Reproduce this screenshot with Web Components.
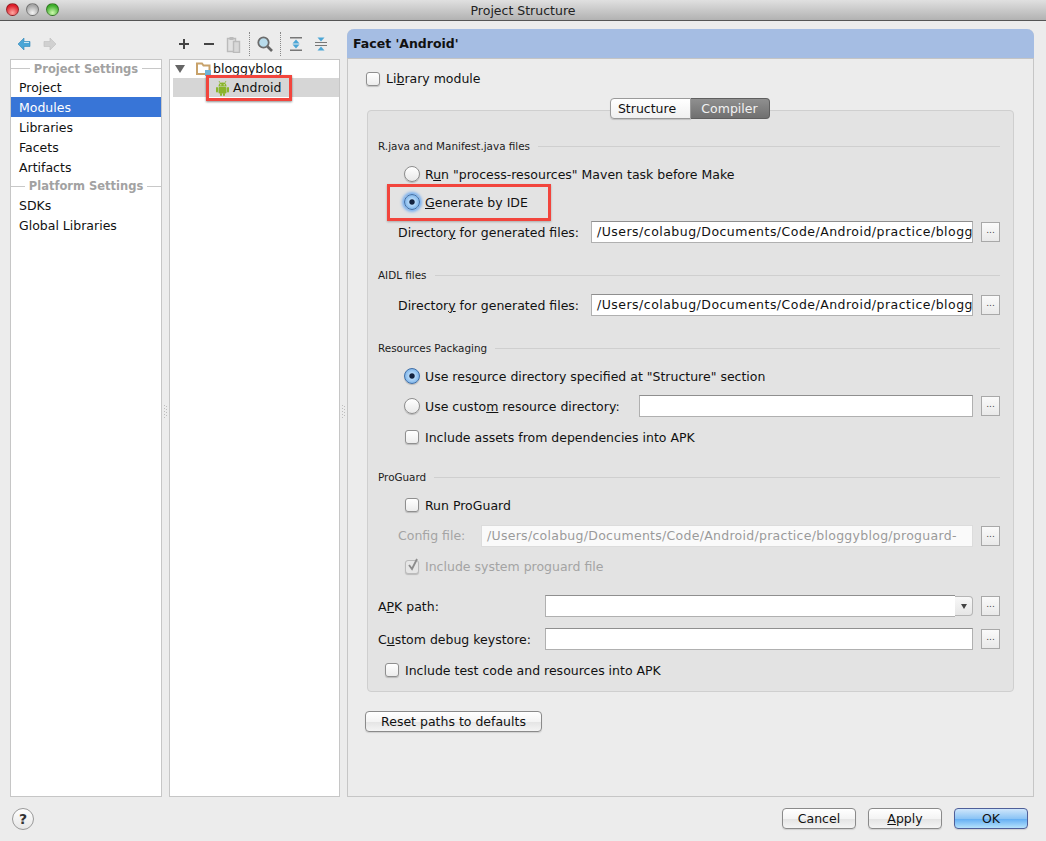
<!DOCTYPE html>
<html>
<head>
<meta charset="utf-8">
<title>Project Structure</title>
<style>
html, body { margin: 0; padding: 0; }
body { width: 1046px; height: 841px; overflow: hidden; background: #ececec; font: 12.5px "DejaVu Sans", sans-serif; color: #111; }
</style>
</head>
<body>
<project-structure></project-structure>

<script>
class TitleBar extends HTMLElement {
  constructor() {
    super();
    this.attachShadow({mode: "open"}).innerHTML = `
    <style>
      :host { display: flex; align-items: center; justify-content: center; position: relative; height: 20px;
        background: linear-gradient(#e0e0e0, #b2b2b2); border-bottom: 1px solid #555; font-size: 12.5px; color: #222; }
      .lights { position: absolute; left: 6px; top: 3px; display: flex; gap: 7px; }
      .lights i { width: 11px; height: 11px; border-radius: 50%; border: 1px solid rgba(0,0,0,.35); }
      .r { background: radial-gradient(circle at 50% 80%, #ffa9a3, #dd1f2b 70%); }
      .g { background: radial-gradient(circle at 50% 80%, #f4f4f4, #a6a6a6 70%); }
      .v { background: radial-gradient(circle at 50% 80%, #cffab0, #3fae2c 70%); }
    </style>
    <div class="lights"><i class="r"></i><i class="g"></i><i class="v"></i></div>
    <slot></slot>`;
  }
}
customElements.define("title-bar", TitleBar);

class TbIcon extends HTMLElement {
  static icons = {
    back: `<path d="M1 7 7 1v3.5h6v5H7V13z" fill="#4ba6d6" stroke="#2f86b8" stroke-width=".6"/><path d="M7 5.5h5" stroke="#c8e6f5"/>`,
    fwd: `<path d="M13 7 7 1v3.5H1v5h6V13z" fill="#d0d0d0" stroke="#bdbdbd" stroke-width=".6"/>`,
    plus: `<path d="M2 7h10M7 2v10" stroke="#444" stroke-width="2"/>`,
    minus: `<path d="M2 7h10" stroke="#444" stroke-width="2"/>`,
    copy: `<path d="M1.5 2.5h8v13h-8z" fill="#e2e2e2" stroke="#bbb" stroke-width="1.4"/><path d="M7.5 5.5h6v11h-6z" fill="#d8d8d8" stroke="#bbb" stroke-width="1.4"/><path d="M3.5 1h4v3h-4z" fill="#bbb"/>`,
    find: `<circle cx="6.5" cy="6.5" r="5.2" fill="#b9dcec" stroke="#6c6c6c" stroke-width="1.8"/><path d="M10.5 10.5 15 15" stroke="#666" stroke-width="2.6"/>`,
    expand: `<path d="M1 .8h12M1 13.2h12" stroke="#777" stroke-width="1.6"/><path d="M7 2.5 10.5 6.500h-7zM7 11.5 10.5 7.500h-7z" fill="#4ba6d6"/>`,
    collapse: `<path d="M1 5.500h12M1 8.500h12" stroke="#777" stroke-width="1.2"/><path d="M7 4.500 10.5 .5h-7zM7 9.500 10.5 13.500h-7z" fill="#4ba6d6"/>`
  };
  constructor() {
    super();
    const n = this.getAttribute("name");
    const big = n == "copy" || n == "find";
    const w = big ? 16 : 14, h = big ? 17 : 14;
    this.attachShadow({mode: "open"}).innerHTML = `
    <style>:host { display: flex; width: 17px; height: 18px; align-items: center; justify-content: center; }</style>
    <svg width="${w}" height="${h}" viewBox="0 0 ${w} ${h}">${TbIcon.icons[n]}</svg>`;
  }
}
customElements.define("tb-icon", TbIcon);

class PanelList extends HTMLElement {
  constructor() {
    super();
    this.attachShadow({mode: "open"}).innerHTML = `
    <style>
      :host { display: block; background: #fff; border: 1px solid #c6c6c6; box-sizing: border-box; height: 738px; }
    </style>
    <slot></slot>`;
  }
}
customElements.define("panel-list", PanelList);

class ListHead extends HTMLElement {
  constructor() {
    super();
    this.attachShadow({mode: "open"}).innerHTML = `
    <style>
      :host { display: flex; align-items: center; height: 17px; gap: 4px; color: #a2a2a2; font-weight: bold; font-size: 11.5px; white-space: nowrap; }
      :host::before, :host::after { content: ""; flex: 1; height: 1px; background: #c8c8c8; }
    </style>
    <slot></slot>`;
  }
}
customElements.define("list-head", ListHead);

class ListItem extends HTMLElement {
  constructor() {
    super();
    this.attachShadow({mode: "open"}).innerHTML = `
    <style>
      :host { display: flex; align-items: center; height: 20px; padding-left: 8px; white-space: nowrap; }
      :host([selected]) { background: #3875d7; color: #fff; }
    </style>
    <slot></slot>`;
  }
}
customElements.define("list-item", ListItem);

class TreePanel extends HTMLElement {
  constructor() {
    super();
    this.attachShadow({mode: "open"}).innerHTML = `
    <style>
      :host { display: block; position: relative; background: #fff; border: 1px solid #c6c6c6; box-sizing: border-box; height: 738px; }
      .row { display: flex; align-items: center; white-space: nowrap; }
      .root { height: 17px; padding-left: 5px; }
      .tw { width: 0; height: 0; border: 5px solid transparent; border-top: 8px solid #666; border-bottom: 0; margin-right: 11px; }
      .root svg { margin-right: 2px; }
      .child { height: 19px; margin: 1px 0 0 3px; padding-left: 42px; background: #d6d6d6; }
      .child svg { margin-right: 3px; }
      .mark { position: absolute; left: 36px; top: 15px; width: 86px; height: 26px; box-sizing: border-box; border: 3px solid #f2453d; box-shadow: 0 1px 2px rgba(0,0,0,.45); }
    </style>
    <div class="row root"><i class="tw"></i>
      <svg width="15" height="14" viewBox="0 0 15 14"><path d="M1 1.500h5l1.500 2H13.500V12H1z" fill="#fff" stroke="#c8a26a" stroke-width="2"/><rect x="9" y="8" width="6" height="6" fill="#6eb4d8"/></svg>
      <span>bloggyblog</span></div>
    <div class="row child">
      <svg width="15" height="16" viewBox="0 0 15 16" fill="#8ab52c"><path d="M3.500 6.500a4 4 0 0 1 8 0z"/><path d="M5.200 3 4 1M9.800 3 11 1" stroke="#8ab52c" stroke-width=".8"/><rect x="3.500" y="7" width="8" height="6.500" rx="1"/><rect x="1" y="7" width="2" height="5.500" rx="1"/><rect x="12" y="7" width="2" height="5.500" rx="1"/><rect x="5" y="13" width="2" height="3" rx="1"/><rect x="8" y="13" width="2" height="3" rx="1"/><circle cx="5.800" cy="4.800" r=".6" fill="#fff"/><circle cx="9.200" cy="4.800" r=".6" fill="#fff"/></svg>
      <span>Android</span></div>
    <div class="mark"></div>`;
  }
}
customElements.define("tree-panel", TreePanel);

// one line of the form; h/top/left place it in the flow of the group
class FormRow extends HTMLElement {
  constructor() {
    super();
    const h = this.getAttribute("h") || 28, top = this.getAttribute("top") || 0, left = this.getAttribute("left") || 0;
    this.attachShadow({mode: "open"}).innerHTML = `
    <style>
      :host { display: flex; align-items: center; box-sizing: border-box; height: ${h}px; margin-top: ${top}px; padding-left: ${left}px; padding-right: 13px; white-space: nowrap; }
    </style>
    <slot></slot>`;
  }
}
customElements.define("form-row", FormRow);

class GroupHead extends HTMLElement {
  constructor() {
    super();
    this.attachShadow({mode: "open"}).innerHTML = `
    <style>
      :host { display: flex; align-items: center; gap: 8px; box-sizing: border-box; height: 18px; margin-top: var(--top, 18px); margin-bottom: 5px; padding: 0 13px 0 10px; font-size: 10.4px; white-space: nowrap; color: #1c1c1c; }
      :host::after { content: ""; flex: 1; height: 1px; background: #cfcfcf; }
    </style>
    <slot></slot>`;
  }
}
customElements.define("group-head", GroupHead);

class MacRadio extends HTMLElement {
  constructor() {
    super();
    this.attachShadow({mode: "open"}).innerHTML = `
    <style>
      :host { display: inline-flex; align-items: center; gap: 5px; position: relative; }
      .o { width: 16px; height: 16px; border-radius: 50%; box-sizing: border-box; border: 1px solid #8d8d8d; background: linear-gradient(#fff, #e8e8e8); box-shadow: 0 1px 1px rgba(0,0,0,.2); }
      :host([checked]) .o { border-color: #3f6fa8; background: radial-gradient(circle at 50% 50%, #14233f 0, #14233f 2.2px, #b4d8f8 3.2px, #5f9fe0 100%); }
      :host([focus]) .o { box-shadow: 0 0 3px 2px #74aef0; }
    </style>
    <span class="o"></span><span><slot></slot></span>`;
  }
}
customElements.define("mac-radio", MacRadio);

class MacCheck extends HTMLElement {
  constructor() {
    super();
    this.attachShadow({mode: "open"}).innerHTML = `
    <style>
      :host { display: inline-flex; align-items: center; gap: 6px; position: relative; }
      :host([disabled]) { color: #a4a4a4; }
      .b { width: 14px; height: 14px; border-radius: 3px; box-sizing: border-box; border: 1px solid #8f8f8f; background: linear-gradient(#fff, #ececec); box-shadow: 0 1px 1px rgba(0,0,0,.18); display: block; }
      :host([disabled]) .b { border-color: #bbb; background: #e6e6e6; }
      svg { position: absolute; left: 2px; top: -1px; display: none; }
      :host([checked]) svg { display: block; }
    </style>
    <span class="b"></span>
    <svg width="12" height="13" viewBox="0 0 12 13"><path d="M2 7l3 4 5-10" fill="none" stroke="#8c8c8c" stroke-width="1.800"/></svg>
    <span><slot></slot></span>`;
  }
}
customElements.define("mac-check", MacCheck);

class TextField extends HTMLElement {
  constructor() {
    super();
    const w = this.getAttribute("w") || 382;
    this.attachShadow({mode: "open"}).innerHTML = `
    <style>
      :host { display: block; box-sizing: border-box; width: ${w}px; height: 22px; margin-left: auto; line-height: 20px; padding-left: 5px; letter-spacing: .48px; background: #fff; border: 1px solid #b0b0b0; border-top-color: #8f8f8f; overflow: hidden; white-space: nowrap; }
      :host([disabled]) { color: #9a9a9a; border-color: #dcdcdc; background: #fafafa; letter-spacing: .28px; }
    </style>
    <slot></slot>`;
  }
}
customElements.define("text-field", TextField);

class DotsButton extends HTMLElement {
  constructor() {
    super();
    this.attachShadow({mode: "open"}).innerHTML = `
    <style>
      :host { display: flex; justify-content: center; box-sizing: border-box; width: 19px; height: 20px; margin-left: 8px; line-height: 14px; font-size: 9px; color: #444; border: 1px solid #a8a8a8; background: linear-gradient(#fafafa, #e9e9e9); }
    </style>
    ...`;
  }
}
customElements.define("dots-button", DotsButton);

class ComboField extends HTMLElement {
  constructor() {
    super();
    this.attachShadow({mode: "open"}).innerHTML = `
    <style>
      :host { display: flex; box-sizing: border-box; width: 428px; height: 22px; margin-left: auto; }
      .t { flex: 1; background: #fff; border: 1px solid #b0b0b0; border-top-color: #8f8f8f; border-right: 0; }
      .a { width: 17px; display: flex; align-items: center; justify-content: center; margin: 1px 0; border: 1px solid #b5b5b5; border-left: 0; border-radius: 0 4px 4px 0; background: linear-gradient(#f8f8f8, #e6e6e6); }
      .a i { width: 0; height: 0; border: 3px solid transparent; border-top: 5px solid #444; border-bottom: 0; }
    </style>
    <div class="t"></div><div class="a"><i></i></div>`;
  }
}
customElements.define("combo-field", ComboField);

class MacButton extends HTMLElement {
  constructor() {
    super();
    const w = this.getAttribute("w") || 74;
    this.attachShadow({mode: "open"}).innerHTML = `
    <style>
      :host { display: flex; align-items: center; justify-content: center; box-sizing: border-box; width: ${w}px; height: 21px; border: 1px solid #8a8a8a; border-radius: 4px; background: linear-gradient(#fff 0, #f4f4f4 50%, #e4e4e4 52%, #f4f4f4 100%); box-shadow: 0 1px 1px rgba(0,0,0,.12); white-space: nowrap; }
      :host([primary]) { border-color: #4f5f99; background: linear-gradient(#cfe6fb 0, #8cc4f5 50%, #62adf3 52%, #b6e2fb 100%); }
    </style>
    <slot></slot>`;
  }
}
customElements.define("mac-button", MacButton);

class MacTabs extends HTMLElement {
  constructor() {
    super();
    this.attachShadow({mode: "open"}).innerHTML = `
    <style>
      :host { display: flex; justify-content: center; height: 21px; margin-bottom: -9px; padding-right: 2px; position: relative; z-index: 1; }
      div { display: flex; align-items: center; justify-content: center; box-sizing: border-box; height: 21px; }
      .s { width: 81px; padding-right: 6px; border: 1px solid #9a9a9a; border-radius: 4px 0 0 4px; background: linear-gradient(#fff, #f0f0f0); box-shadow: 0 1px 1px rgba(0,0,0,.15); }
      .c { width: 79px; border: 1px solid #5f5f5f; border-left: 0; border-radius: 0 4px 4px 0; background: linear-gradient(#8f8f8f, #707070); color: #f2f2f2; }
    </style>
    <div class="s">Structure</div><div class="c">Compiler</div>`;
  }
}
customElements.define("mac-tabs", MacTabs);

class FormGroup extends HTMLElement {
  constructor() {
    super();
    this.attachShadow({mode: "open"}).innerHTML = `
    <style>
      :host { display: block; box-sizing: border-box; position: relative; width: 647px; height: 582px; margin-left: 19px; padding-top: 26px; background: #e3e3e3; border: 1px solid #cfcfcf; border-radius: 4px; }
    </style>
    <slot></slot>`;
  }
}
customElements.define("form-group", FormGroup);

class FacetPanel extends HTMLElement {
  constructor() {
    super();
    this.attachShadow({mode: "open"}).innerHTML = `
    <style>
      :host { display: flex; flex-direction: column; box-sizing: border-box; width: 687px; height: 768px; border: 1px solid #c6c6c6; border-top: 0; border-radius: 7px 7px 0 0; }
      header { display: flex; align-items: center; height: 29px; padding-left: 6px; margin: 0 -1px; background: #a5bde3; border-bottom: 1px solid #c4c4c4; border-radius: 7px 7px 0 0; font-weight: bold; font-size: 12.5px; color: #111; }
      .lib { height: 39px; padding-left: 18px; display: flex; align-items: center; }
      .foot { margin: 19px 0 0 17px; }
    </style>
    <header><slot name="title"></slot></header>
    <div class="lib"><slot name="lib"></slot></div>
    <slot></slot>
    <div class="foot"><slot name="foot"></slot></div>`;
  }
}
customElements.define("facet-panel", FacetPanel);

class PaneGrip extends HTMLElement {
  constructor() {
    super();
    this.attachShadow({mode: "open"}).innerHTML = `
    <style>
      :host { display: flex; justify-content: center; width: 7px; flex: none; padding-top: 376px; box-sizing: border-box; }
      svg { flex: none; }
    </style>
    <svg width="4" height="14" viewBox="0 0 4 14" fill="#bdbdbd">
      <rect x="0" y="0" width="1" height="1"/><rect x="2" y="1" width="1" height="1"/><rect x="0" y="3" width="1" height="1"/><rect x="2" y="4" width="1" height="1"/>
      <rect x="0" y="6" width="1" height="1"/><rect x="2" y="7" width="1" height="1"/><rect x="0" y="9" width="1" height="1"/><rect x="2" y="10" width="1" height="1"/><rect x="0" y="12" width="1" height="1"/>
    </svg>`;
  }
}
customElements.define("pane-grip", PaneGrip);

class ProjectStructure extends HTMLElement {
  constructor() {
    super();
    this.attachShadow({mode: "open"}).innerHTML = `
    <style>
      :host { display: block; width: 1046px; height: 841px; position: relative; }
      .body { display: flex; height: 768px; padding: 8px 12px 0 10px; }
      .left { width: 152px; flex: none; }
      .mid { width: 171px; flex: none; }
      .bar { display: flex; align-items: center; height: 30px; }
      .bar.nav { padding-left: 5px; gap: 9px; }
      .bar.tools { padding-left: 6px; }
      .gap { width: 8px; }
      .sep { width: 0; height: 24px; border-left: 1px dotted #888; margin: 0 6px 0 7px; }
      .foot { display: flex; align-items: center; height: 21px; margin-top: 11px; padding: 0 18px 0 12px; gap: 12px; }
      .help { width: 22px; height: 22px; box-sizing: border-box; border: 1px solid #9a9a9a; border-radius: 50%; background: linear-gradient(#fff, #e6e6e6); display: flex; align-items: center; justify-content: center; font-weight: bold; font-size: 14px; color: #333; margin-right: auto; }
      .mark { position: absolute; left: 387px; top: 184px; width: 164px; height: 37px; box-sizing: border-box; border: 3px solid #f2453d; box-shadow: 0 1px 2px rgba(0,0,0,.25); }
      .tall { height: 18px; }
    </style>
    <title-bar>Project Structure</title-bar>
    <div class="body">
      <div class="left">
        <div class="bar nav"><tb-icon name="back"></tb-icon><tb-icon name="fwd"></tb-icon></div>
        <panel-list>
          <list-head>Project Settings</list-head>
          <list-item>Project</list-item>
          <list-item selected>Modules</list-item>
          <list-item>Libraries</list-item>
          <list-item>Facets</list-item>
          <list-item>Artifacts</list-item>
          <list-head class="tall">Platform Settings</list-head>
          <list-item>SDKs</list-item>
          <list-item>Global Libraries</list-item>
        </panel-list>
      </div>
      <pane-grip></pane-grip>
      <div class="mid">
        <div class="bar tools">
          <tb-icon name="plus"></tb-icon><span class="gap"></span>
          <tb-icon name="minus"></tb-icon><span class="gap"></span>
          <tb-icon name="copy"></tb-icon><i class="sep"></i>
          <tb-icon name="find"></tb-icon><i class="sep"></i>
          <tb-icon name="expand"></tb-icon><span class="gap"></span>
          <tb-icon name="collapse"></tb-icon>
        </div>
        <tree-panel></tree-panel>
      </div>
      <pane-grip></pane-grip>
      <facet-panel>
        <span slot="title">Facet 'Android'</span>
        <mac-check slot="lib">Li<u>b</u>rary module</mac-check>
        <mac-tabs></mac-tabs>
        <form-group>
          <group-head style="--top:0px">R.java and Manifest.java files</group-head>
          <form-row left="36"><mac-radio>R<u>u</u>n "process-resources" Maven task before Make</mac-radio></form-row>
          <form-row left="36"><mac-radio checked focus><u>G</u>enerate by IDE</mac-radio></form-row>
          <form-row h="32" left="30"><span>Director<u>y</u> for generated files:</span><text-field>/Users/colabug/Documents/Code/Android/practice/blogg</text-field><dots-button></dots-button></form-row>
          <group-head>AIDL files</group-head>
          <form-row h="32" left="30"><span>Director<u>y</u> for generated files:</span><text-field>/Users/colabug/Documents/Code/Android/practice/blogg</text-field><dots-button></dots-button></form-row>
          <group-head>Resources Packaging</group-head>
          <form-row left="36"><mac-radio checked>Use res<u>o</u>urce directory specified at "Structure" section</mac-radio></form-row>
          <form-row h="32" left="36"><mac-radio>Use custo<u>m</u> resource directory:</mac-radio><text-field w="334"></text-field><dots-button></dots-button></form-row>
          <form-row h="30" left="37"><mac-check>Include assets from dependencies into APK</mac-check></form-row>
          <group-head style="--top:16px">ProGuard</group-head>
          <form-row left="37"><mac-check>Run ProGuard</mac-check></form-row>
          <form-row h="33" left="30"><span style="color:#a4a4a4">Config file:</span><text-field disabled w="492">/Users/colabug/Documents/Code/Android/practice/bloggyblog/proguard-</text-field><dots-button></dots-button></form-row>
          <form-row h="29" left="37"><mac-check checked disabled>Include system proguard file</mac-check></form-row>
          <form-row h="32" top="9" left="10"><span>A<u>P</u>K path:</span><combo-field></combo-field><dots-button></dots-button></form-row>
          <form-row h="34" left="10"><span>C<u>u</u>stom debug keystore:</span><text-field w="428"></text-field><dots-button></dots-button></form-row>
          <form-row left="17"><mac-check>Include test code and resources into APK</mac-check></form-row>
        </form-group>
        <mac-button slot="foot" w="177">Reset paths to defaults</mac-button>
      </facet-panel>
    </div>
    <div class="foot">
      <div class="help">?</div>
      <mac-button>Cancel</mac-button>
      <mac-button><span><u>A</u>pply</span></mac-button>
      <mac-button primary>OK</mac-button>
    </div>
    <div class="mark"></div>`;
  }
}
customElements.define("project-structure", ProjectStructure);
</script>
</body>
</html>
